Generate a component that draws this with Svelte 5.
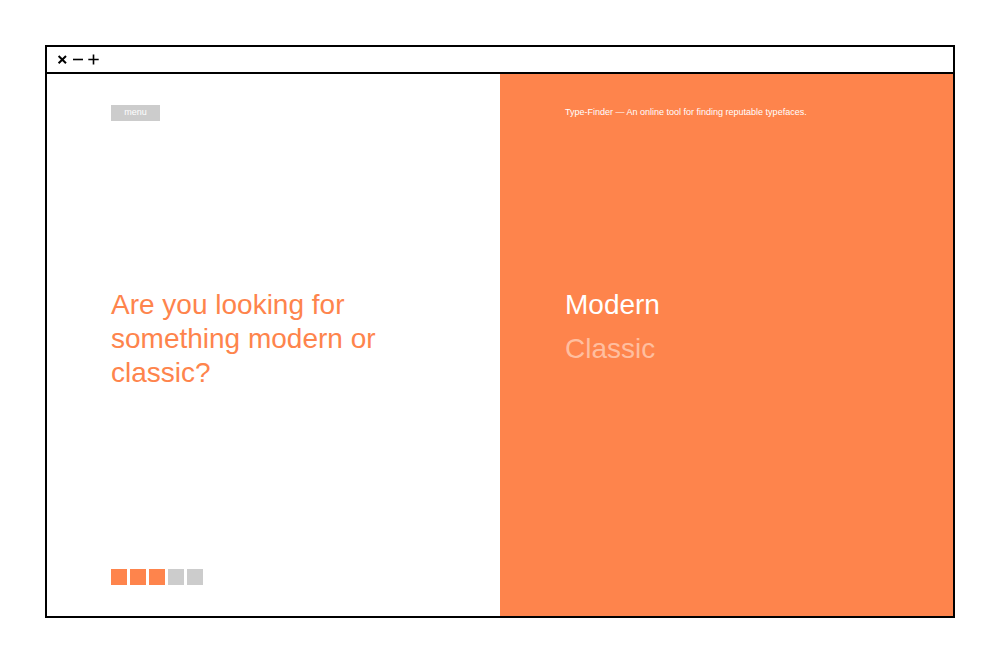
<script>
  const steps = [1, 2, 3, 4, 5];
  const current = 3;
  const options = ['Modern', 'Classic'];
  let selected = $state('Modern');
</script>

<div class="page">
  <div class="window">
    <header class="titlebar">
      <button class="control" aria-label="Close">
        <svg viewBox="0 0 12 12"><path stroke-width="2" d="M2.6 2l7.4 7.2M10 2L2.6 9.2" /></svg>
      </button>
      <button class="control" aria-label="Minimise">
        <svg viewBox="0 0 12 12"><path stroke-width="1.6" d="M1 5.5h10" /></svg>
      </button>
      <button class="control" aria-label="Expand">
        <svg viewBox="0 0 12 12"><path stroke-width="1.6" d="M.3 5.5h10.4M5.5 .5v10" /></svg>
      </button>
    </header>
    <main class="panels">
      <section class="panel question">
        <div class="top"><button class="menu">menu</button></div>
        <h1>Are you looking for something modern or classic?</h1>
        <div class="steps" role="progressbar" aria-label="Progress" aria-valuenow={current} aria-valuemin="1" aria-valuemax={steps.length}>
          {#each steps as step}
            <span class="step" class:done={step <= current}></span>
          {/each}
        </div>
      </section>
      <section class="panel answers">
        <div class="top"><p>Type-Finder — An online tool for finding reputable typefaces.</p></div>
        <div class="options">
          {#each options as option}
            <button class="option" class:selected={selected === option} aria-pressed={selected === option} onclick={() => (selected = option)}>{option}</button>
          {/each}
        </div>
      </section>
    </main>
  </div>
</div>

<style>
  :global(body) {
    margin: 0;
    background: #fff;
  }
  .page {
    box-sizing: border-box;
    min-height: 100vh;
    padding: 45px;
    display: flex;
    font-family: "Liberation Sans", Arial, sans-serif;
  }
  button {
    font: inherit;
    color: inherit;
    border: 0;
    padding: 0;
    background: none;
    cursor: pointer;
  }
  .window {
    flex: 1;
    display: flex;
    flex-direction: column;
    border: 2px solid #000;
  }
  .titlebar {
    display: flex;
    align-items: center;
    gap: 4px;
    height: 25px;
    padding: 0 9px;
    border-bottom: 2px solid #000;
  }
  .control {
    width: 12px;
    height: 12px;
  }
  .control svg {
    display: block;
    width: 12px;
    height: 12px;
    fill: none;
    stroke: #000;
  }
  .panels {
    flex: 1;
    display: grid;
    grid-template-columns: 1fr 1fr;
  }
  .panel {
    display: flex;
    flex-direction: column;
    padding: 31px 65px;
  }
  .question {
    padding-left: 64px;
  }
  .answers {
    background: #fe844c;
    color: #fff;
  }
  .top {
    height: 183px;
    font-size: 9px;
    line-height: 15px;
  }
  .top p {
    margin: 0;
  }
  .menu {
    display: block;
    width: 49px;
    height: 16px;
    padding-bottom: 1px;
    background: #ccc;
    color: #fff;
  }
  h1 {
    margin: 0;
    max-width: 300px;
    font-size: 28px;
    line-height: 34px;
    font-weight: 400;
    color: #fe844c;
  }
  .steps {
    display: flex;
    gap: 3px;
    margin-top: auto;
  }
  .step {
    width: 16px;
    height: 16px;
    background: #ccc;
  }
  .step.done {
    background: #fe844c;
  }
  .options {
    display: flex;
    flex-direction: column;
    align-items: flex-start;
    gap: 10px;
    font-size: 28px;
    line-height: 34px;
  }
  .option {
    color: #ffbe9f;
  }
  .option.selected {
    color: #fff;
  }
</style>
